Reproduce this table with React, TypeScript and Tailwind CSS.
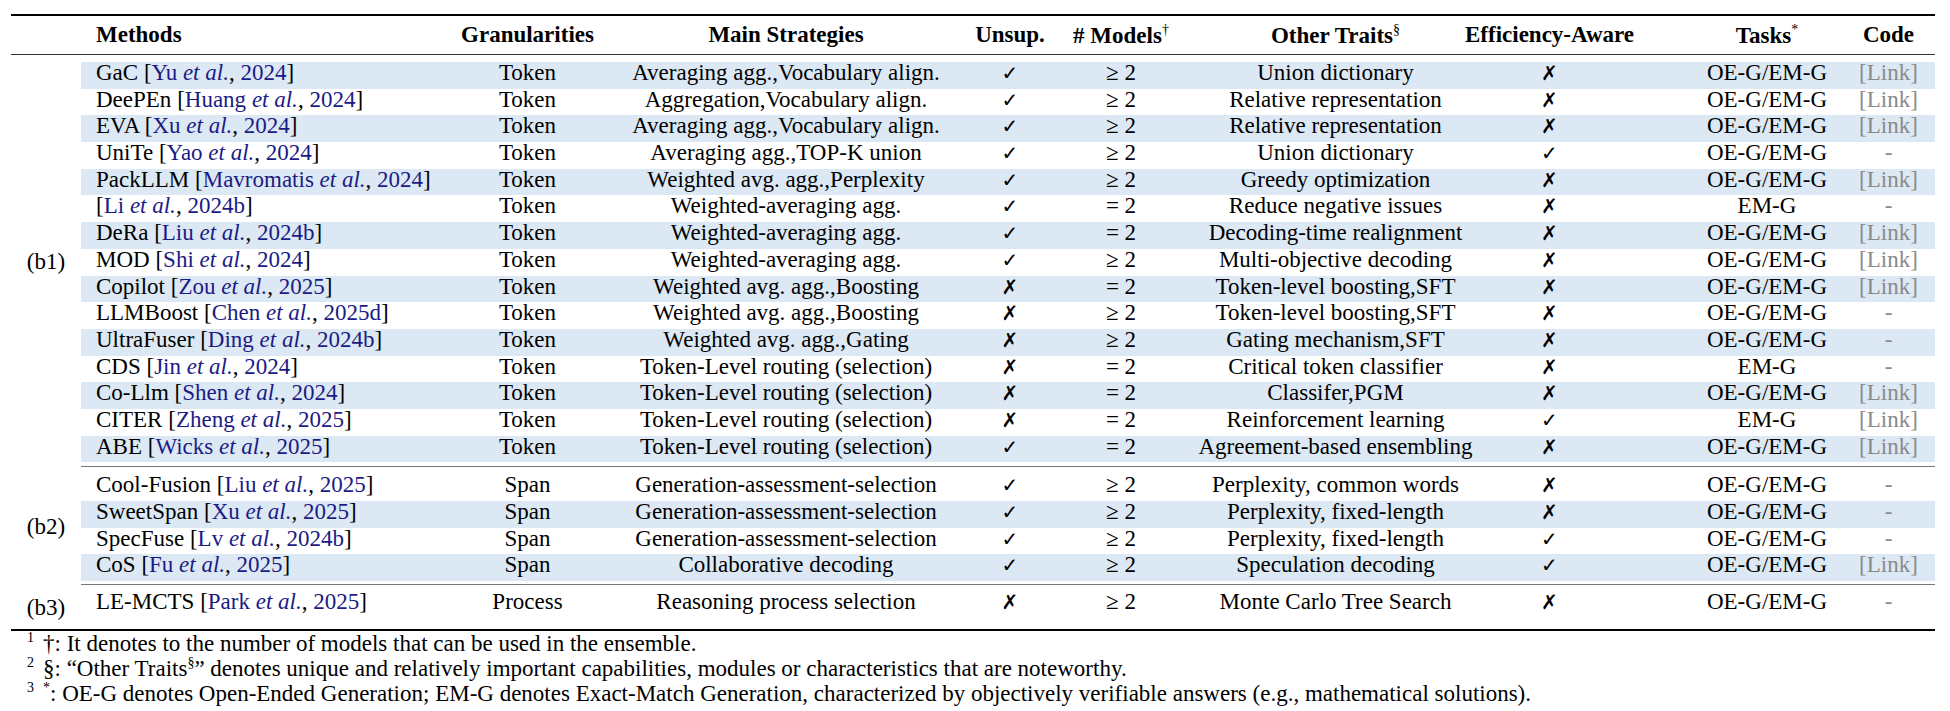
import React from "react";

type Row = {
  name: string;
  author: string;
  year: string;
  gran: string;
  strategy: string;
  unsup: boolean;
  models: string;
  traits: string;
  eff: boolean;
  tasks: string;
  link: boolean;
};

const r = (
  name: string,
  author: string,
  year: string,
  gran: string,
  strategy: string,
  unsup: boolean,
  models: string,
  traits: string,
  eff: boolean,
  tasks: string,
  link: boolean
): Row => ({ name, author, year, gran, strategy, unsup, models, traits, eff, tasks, link });

const GE = "≥ 2";
const EQ = "= 2";
const BOTH = "OE-G/EM-G";

const B1: Row[] = [
  r("GaC", "Yu", "2024", "Token", "Averaging agg.,Vocabulary align.", true, GE, "Union dictionary", false, BOTH, true),
  r("DeePEn", "Huang", "2024", "Token", "Aggregation,Vocabulary align.", true, GE, "Relative representation", false, BOTH, true),
  r("EVA", "Xu", "2024", "Token", "Averaging agg.,Vocabulary align.", true, GE, "Relative representation", false, BOTH, true),
  r("UniTe", "Yao", "2024", "Token", "Averaging agg.,TOP-K union", true, GE, "Union dictionary", true, BOTH, false),
  r("PackLLM", "Mavromatis", "2024", "Token", "Weighted avg. agg.,Perplexity", true, GE, "Greedy optimization", false, BOTH, true),
  r("", "Li", "2024b", "Token", "Weighted-averaging agg.", true, EQ, "Reduce negative issues", false, "EM-G", false),
  r("DeRa", "Liu", "2024b", "Token", "Weighted-averaging agg.", true, EQ, "Decoding-time realignment", false, BOTH, true),
  r("MOD", "Shi", "2024", "Token", "Weighted-averaging agg.", true, GE, "Multi-objective decoding", false, BOTH, true),
  r("Copilot", "Zou", "2025", "Token", "Weighted avg. agg.,Boosting", false, EQ, "Token-level boosting,SFT", false, BOTH, true),
  r("LLMBoost", "Chen", "2025d", "Token", "Weighted avg. agg.,Boosting", false, GE, "Token-level boosting,SFT", false, BOTH, false),
  r("UltraFuser", "Ding", "2024b", "Token", "Weighted avg. agg.,Gating", false, GE, "Gating mechanism,SFT", false, BOTH, false),
  r("CDS", "Jin", "2024", "Token", "Token-Level routing (selection)", false, EQ, "Critical token classifier", false, "EM-G", false),
  r("Co-Llm", "Shen", "2024", "Token", "Token-Level routing (selection)", false, EQ, "Classifer,PGM", false, BOTH, true),
  r("CITER", "Zheng", "2025", "Token", "Token-Level routing (selection)", false, EQ, "Reinforcement learning", true, "EM-G", true),
  r("ABE", "Wicks", "2025", "Token", "Token-Level routing (selection)", true, EQ, "Agreement-based ensembling", false, BOTH, true),
];

const B2: Row[] = [
  r("Cool-Fusion", "Liu", "2025", "Span", "Generation-assessment-selection", true, GE, "Perplexity, common words", false, BOTH, false),
  r("SweetSpan", "Xu", "2025", "Span", "Generation-assessment-selection", true, GE, "Perplexity, fixed-length", false, BOTH, false),
  r("SpecFuse", "Lv", "2024b", "Span", "Generation-assessment-selection", true, GE, "Perplexity, fixed-length", true, BOTH, false),
  r("CoS", "Fu", "2025", "Span", "Collaborative decoding", true, GE, "Speculation decoding", true, BOTH, true),
];

const B3: Row[] = [
  r("LE-MCTS", "Park", "2025", "Process", "Reasoning process selection", false, GE, "Monte Carlo Tree Search", false, BOTH, false),
];

// group label | methods | gran | strategies | unsup | models | traits | efficiency | tasks | code
const FULL_COLS = "grid grid-cols-[70px_364px_165px_352px_96px_126px_303px_205px_150px_93px]";
const ROW_COLS = "grid grid-cols-[364px_165px_352px_96px_126px_303px_205px_150px_93px]";

function Mark({ ok }: { ok: boolean }) {
  return <span className="font-['DejaVu_Sans',sans-serif] text-[20px]">{ok ? "✓" : "✗"}</span>;
}

function Cite({ author, year }: { author: string; year: string }) {
  return (
    <>
      [<span className="text-[#1b1b86]">{author} <i>et al.</i></span>, <span className="text-[#1b1b86]">{year}</span>]
    </>
  );
}

function TableRow({ row, band }: { row: Row; band: boolean }) {
  return (
    <div className={`${ROW_COLS} h-[26.7px] leading-[22.7px] ${band ? "bg-[#dce8f4]" : ""}`}>
      <div className="pl-[15px] whitespace-nowrap">
        {row.name ? `${row.name} ` : ""}
        <Cite author={row.author} year={row.year} />
      </div>
      <div className="text-center">{row.gran}</div>
      <div className="text-center whitespace-nowrap">{row.strategy}</div>
      <div className="text-center">
        <Mark ok={row.unsup} />
      </div>
      <div className="text-center">{row.models}</div>
      <div className="text-center whitespace-nowrap">{row.traits}</div>
      <div className="flex justify-center pr-[80px]">
        <Mark ok={row.eff} />
      </div>
      <div className="text-center">{row.tasks}</div>
      <div className="text-center text-[#8a8a8a]">{row.link ? "[Link]" : "-"}</div>
    </div>
  );
}

function Group({ label, rows, bandOdd }: { label: string; rows: Row[]; bandOdd: boolean }) {
  return (
    <div className="flex">
      <div className="w-[70px] flex items-center justify-center">{label}</div>
      <div className="flex flex-col">
        {rows.map((row, i) => (
          <TableRow key={i} row={row} band={bandOdd ? i % 2 === 0 : i % 2 === 1} />
        ))}
      </div>
    </div>
  );
}

function Sup({ children }: { children: React.ReactNode }) {
  return <span className="text-[14px] align-[9px] font-normal leading-none">{children}</span>;
}

export default function App() {
  return (
    <div className="w-[1950px] h-[711px] bg-white text-black pt-[14px] pl-[11px] font-['Liberation_Serif','Times_New_Roman',serif] text-[23px] overflow-hidden">
      <div className="w-[1924px]">
        <div className="h-[2px] bg-black" />
        <div className={`${FULL_COLS} h-[38px] items-center font-bold leading-[22.7px] whitespace-nowrap`}>
          <div />
          <div className="pl-[15px]">Methods</div>
          <div className="text-center">Granularities</div>
          <div className="text-center">Main Strategies</div>
          <div className="text-center">Unsup.</div>
          <div className="text-center">
            # Models<Sup>†</Sup>
          </div>
          <div className="text-center">
            Other Traits<Sup>§</Sup>
          </div>
          <div className="flex justify-center pr-[80px]">Efficiency-Aware</div>
          <div className="text-center">
            Tasks<Sup>*</Sup>
          </div>
          <div className="text-center">Code</div>
        </div>
        <div className="h-px bg-[#333]" />

        <div className="mt-[7px]">
          <Group label="(b1)" rows={B1} bandOdd />
        </div>
        <div className="ml-[70px] mt-[4px] h-px bg-[#777]" />
        <div className="mt-[7px]">
          <Group label="(b2)" rows={B2} bandOdd={false} />
        </div>
        <div className="ml-[70px] mt-[3px] h-px bg-[#777]" />
        <div className="mt-[6px]">
          <Group label="(b3)" rows={B3} bandOdd={false} />
        </div>
        <div className="mt-[3px] h-[2px] bg-black" />
      </div>

      <div className="flex flex-col leading-[25px] whitespace-nowrap">
        <div className="flex">
          <div className="w-[32px] pl-[16px]">
            <Sup>1</Sup>
          </div>
          <div>†: It denotes to the number of models that can be used in the ensemble.</div>
        </div>
        <div className="flex">
          <div className="w-[32px] pl-[16px]">
            <Sup>2</Sup>
          </div>
          <div>
            §: “Other Traits<Sup>§</Sup>” denotes unique and relatively important capabilities, modules or characteristics that are noteworthy.
          </div>
        </div>
        <div className="flex">
          <div className="w-[32px] pl-[16px]">
            <Sup>3</Sup>
          </div>
          <div>
            <Sup>*</Sup>: OE-G denotes Open-Ended Generation; EM-G denotes Exact-Match Generation, characterized by objectively verifiable answers (e.g., mathematical solutions).
          </div>
        </div>
      </div>
    </div>
  );
}
